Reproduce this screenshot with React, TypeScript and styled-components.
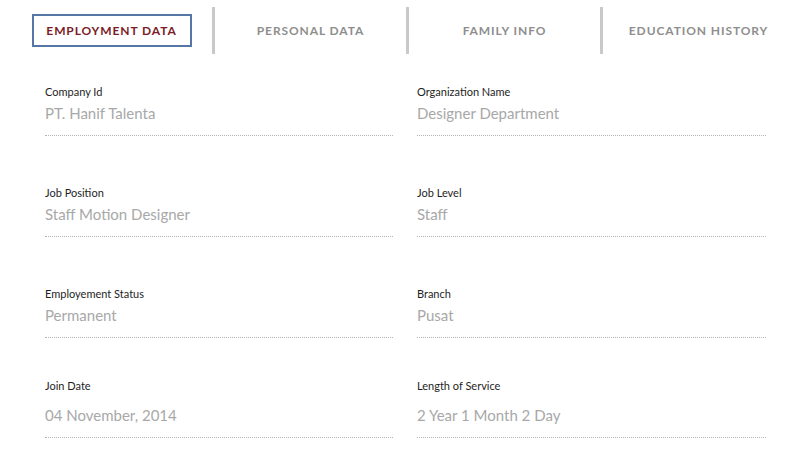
import React from 'react';
import styled, { createGlobalStyle } from 'styled-components';

type Field = { label: string; value: string };
type Row = { fields: Field[]; wide?: boolean; top: number };

const tabs = ['Employment Data', 'Personal Data', 'Family Info', 'Education History'];

const rows: Row[] = [
  {
    top: 31,
    fields: [
      { label: 'Company Id', value: 'PT. Hanif Talenta' },
      { label: 'Organization Name', value: 'Designer Department' },
    ],
  },
  {
    top: 50,
    fields: [
      { label: 'Job Position', value: 'Staff Motion Designer' },
      { label: 'Job Level', value: 'Staff' },
    ],
  },
  {
    top: 50,
    fields: [
      { label: 'Employement Status', value: 'Permanent' },
      { label: 'Branch', value: 'Pusat' },
    ],
  },
  {
    top: 41,
    wide: true,
    fields: [
      { label: 'Join Date', value: '04 November, 2014' },
      { label: 'Length of Service', value: '2 Year 1 Month 2 Day' },
    ],
  },
];

export default function App() {
  const active = 0;
  return (
    <>
      <GlobalStyle />
      <Page>
        <TabBar>
          {tabs.map((t, i) => (
            <Tab key={t} divided={i > 0}>
              <TabLabel active={i === active}>{t}</TabLabel>
            </Tab>
          ))}
        </TabBar>
        {rows.map((row, i) => (
          <FieldRow key={i} top={row.top}>
            {row.fields.map((f) => (
              <FieldBox key={f.label}>
                <Label>{f.label}</Label>
                <Value wide={row.wide}>{f.value}</Value>
              </FieldBox>
            ))}
          </FieldRow>
        ))}
      </Page>
    </>
  );
}

const GlobalStyle = createGlobalStyle`
  body {
    margin: 0;
    background: #fff;
    font-family: Lato, "Open Sans", sans-serif;
  }
`;

const Page = styled.div`
  width: 812px;
  height: 452px;
  overflow: hidden;
`;

const TabBar = styled.div`
  display: flex;
  padding: 7px 0 0 15px;
`;

const Tab = styled.div<{ divided: boolean }>`
  width: ${(p) => (p.divided ? '194px' : '197px')};
  height: 47px;
  display: flex;
  align-items: center;
  justify-content: center;
  box-sizing: border-box;
  padding-right: ${(p) => (p.divided ? '0' : '4px')};
  border-left: ${(p) => (p.divided ? '3px solid #c9c9c9' : 'none')};
`;

const TabLabel = styled.div<{ active: boolean }>`
  box-sizing: border-box;
  width: 160px;
  height: 33px;
  display: flex;
  align-items: center;
  justify-content: center;
  border: 2px solid ${(p) => (p.active ? '#5676a6' : 'transparent')};
  color: ${(p) => (p.active ? '#7b1c26' : '#8e8e8e')};
  font-size: 12px;
  font-weight: 700;
  letter-spacing: 0.9px;
  text-transform: uppercase;
  white-space: nowrap;
`;

const FieldRow = styled.div<{ top: number }>`
  display: grid;
  grid-template-columns: 348px 349px;
  column-gap: 24px;
  padding-left: 45px;
  margin-top: ${(p) => p.top}px;
`;

const FieldBox = styled.div`
  display: flex;
  flex-direction: column;
  padding-bottom: 12px;
  border-bottom: 1px dotted #b5b5b5;
`;

const Label = styled.div`
  font-size: 11px;
  line-height: 14px;
  color: #1e1e1e;
`;

const Value = styled.div<{ wide?: boolean }>`
  margin-top: ${(p) => (p.wide ? '12px' : '4px')};
  font-size: 15px;
  line-height: 20px;
  color: #a8a8a8;
`;
